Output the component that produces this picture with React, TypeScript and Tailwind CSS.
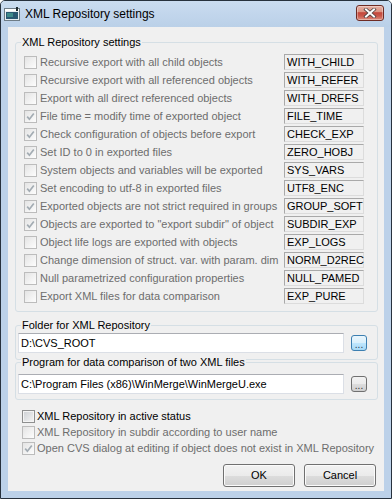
import React from 'react'

type Row = { label: string; code: string; checked: boolean }

const rows: Row[] = [
  { label: 'Recursive export with all child objects', code: 'WITH_CHILD', checked: false },
  { label: 'Recursive export with all referenced objects', code: 'WITH_REFER', checked: false },
  { label: 'Export with all direct referenced objects', code: 'WITH_DREFS', checked: false },
  { label: 'File time = modify time of exported object', code: 'FILE_TIME', checked: true },
  { label: 'Check configuration of objects before export', code: 'CHECK_EXP', checked: true },
  { label: 'Set ID to 0 in exported files', code: 'ZERO_HOBJ', checked: true },
  { label: 'System objects and variables will be exported', code: 'SYS_VARS', checked: false },
  { label: 'Set encoding to utf-8 in exported files', code: 'UTF8_ENC', checked: true },
  { label: 'Exported objects are not strict required in groups', code: 'GROUP_SOFT', checked: true },
  { label: 'Objects are exported to "export subdir" of object', code: 'SUBDIR_EXP', checked: true },
  { label: 'Object life logs are exported with objects', code: 'EXP_LOGS', checked: false },
  { label: 'Change dimension of struct. var. with param. dim', code: 'NORM_D2REC', checked: false },
  { label: 'Null parametrized configuration properties', code: 'NULL_PAMED', checked: false },
  { label: 'Export XML files for data comparison', code: 'EXP_PURE', checked: false },
]

function CheckBox({ checked, disabled }: { checked?: boolean; disabled?: boolean }) {
  return (
    <span
      className={
        disabled
          ? 'flex h-[13px] w-[13px] shrink-0 items-center justify-center border border-[#bcbcbc] bg-linear-to-br from-[#e4e4e4] to-[#fdfdfd]'
          : 'flex h-[13px] w-[13px] shrink-0 items-center justify-center border border-[#8e8f8f] bg-linear-to-br from-[#cdd0d4] to-[#f5f5f5] shadow-[inset_0_0_0_1px_#f4f4f4]'
      }
    >
      {checked && (
        <svg width="11" height="11" viewBox="0 0 11 11">
          <path d="M2.2 5.6 L4.4 8.2 L8.8 2.4" fill="none" stroke="#a3acb3" strokeWidth="1.7" />
        </svg>
      )}
    </span>
  )
}

// legend sits on the group border; offset depends on the fieldset's left padding
function Legend({ children, inset }: { children: React.ReactNode; inset?: boolean }) {
  return (
    <legend
      className={
        inset
          ? 'ml-[3px] bg-[#f0f0f0] px-[1px] leading-[13px] text-black'
          : '-ml-[3px] bg-[#f0f0f0] px-[1px] leading-[13px] text-black'
      }
    >
      {children}
    </legend>
  )
}

function BrowseButton({ hot }: { hot?: boolean }) {
  return (
    <button
      className={
        hot
          ? 'flex h-[16px] w-[16px] shrink-0 items-end justify-center rounded-[3px] border border-[#3c7fb1] bg-[linear-gradient(#eaf6fd,#d9f0fc_50%,#bee6fd_50%,#a7d9f5)] pb-[1px] text-[10px] leading-[8px] text-[#1e3950]'
          : 'flex h-[16px] w-[16px] shrink-0 items-end justify-center rounded-[3px] border border-[#707070] bg-[linear-gradient(#f2f2f2,#ebebeb_50%,#dddddd_50%,#cfcfcf)] pb-[1px] text-[10px] leading-[8px] text-[#333]'
      }
    >
      ...
    </button>
  )
}

function AppIcon() {
  return (
    <svg width="16" height="16" viewBox="0 0 16 16">
      <rect x="0.5" y="2.5" width="15" height="12" fill="#e9eef2" stroke="#6e7c86" />
      <rect x="1" y="3" width="14" height="2" fill="#ffffff" />
      <rect x="2" y="6" width="12" height="7" fill="#2a5872" />
      <rect x="3" y="7" width="6" height="4" fill="#3f8a8a" />
      <rect x="12" y="1" width="2" height="4" fill="#1e2a30" />
    </svg>
  )
}

function CloseButton() {
  return (
    <div className="flex h-[16px] w-[28px] items-center justify-center rounded-[3px] border border-[#6e2b24] bg-[linear-gradient(#e6b0a5,#dc9584_40%,#c4473b_48%,#c9574a_70%,#dd8d7c)] shadow-[inset_0_0_0_1px_rgba(255,255,255,0.35)]">
      <svg width="14" height="10" viewBox="0 0 14 10">
        <path d="M3 1.5 L11 8.5 M11 1.5 L3 8.5" stroke="#4d4040" strokeWidth="3.6" strokeLinecap="square" />
        <path d="M3 1.5 L11 8.5 M11 1.5 L3 8.5" stroke="#ffffff" strokeWidth="2" strokeLinecap="square" />
      </svg>
    </div>
  )
}

export default function App() {
  return (
    <div className="h-[499px] w-[392px] font-['Liberation_Sans',Arial,sans-serif] text-[11px]">
      <div className="flex h-full flex-col rounded-t-[5px] border border-[#27313d] bg-[#bcd1e9]">
        {/* Title bar */}
        <div className="flex h-[26px] shrink-0 items-start rounded-t-[4px] bg-linear-to-b from-[#cadcf0] to-[#bad0e8]">
          <div className="ml-[3px] mt-[5px]">
            <AppIcon />
          </div>
          <span className="ml-[5px] mt-[6px] text-[12px] leading-[14px] text-black">XML Repository settings</span>
          <div className="ml-auto mr-[7px] mt-[4px]">
            <CloseButton />
          </div>
        </div>

        {/* Client area */}
        <div className="mx-[7px] mb-[7px] flex flex-1 flex-col bg-[#f0f0f0] pt-[9px]">
          <fieldset className="ml-[7px] mr-[6px] rounded-[3px] border border-[#d5dfe5] pb-[6px] pl-[8px] pr-[13px] pt-[4px]">
            <Legend>XML Repository settings</Legend>
            {rows.map((row) => (
              <div key={row.code} className="flex h-[18px] items-center">
                <CheckBox checked={row.checked} disabled />
                <span className="ml-[3px] flex-1 overflow-hidden whitespace-nowrap text-[#6d6d6d]">{row.label}</span>
                <div className="ml-[2px] flex h-[16px] w-[80px] shrink-0 items-center border border-[#a9a9a9] border-b-[#dcdcdc] border-r-[#dcdcdc] pl-[2px] text-black">
                  {row.code}
                </div>
              </div>
            ))}
          </fieldset>

          <fieldset className="ml-[7px] mr-[6px] mt-[7px] rounded-[3px] border border-[#d5dfe5] pb-[6px] pl-[2px] pr-[10px] pt-[1px]">
            <Legend inset>Folder for XML Repository</Legend>
            <div className="flex items-center gap-[7px]">
              <div className="flex h-[20px] flex-1 items-center border border-[#dbdfe6] border-t-[#abadb3] bg-white pl-[2px] text-black">
                D:\CVS_ROOT
              </div>
              <BrowseButton hot />
            </div>
          </fieldset>

          <fieldset className="relative ml-[7px] mr-[6px] -mt-[4px] rounded-[3px] border border-[#d5dfe5] pb-[5px] pl-[2px] pr-[10px] pt-[5px]">
            <Legend inset>Program for data comparison of two XML files</Legend>
            <div className="flex items-center gap-[7px]">
              <div className="flex h-[20px] flex-1 items-center border border-[#dbdfe6] border-t-[#abadb3] bg-white pl-[2px] text-black">
                C:\Program Files (x86)\WinMerge\WinMergeU.exe
              </div>
              <BrowseButton />
            </div>
          </fieldset>

          <div className="mt-[8px] flex flex-col pl-[14px]">
            <div className="flex h-[16px] items-center">
              <CheckBox />
              <span className="ml-[2px] text-black">XML Repository in active status</span>
            </div>
            <div className="flex h-[16px] items-center">
              <CheckBox disabled />
              <span className="ml-[2px] text-[#6d6d6d]">XML Repository in subdir according to user name</span>
            </div>
            <div className="flex h-[16px] items-center">
              <CheckBox checked disabled />
              <span className="ml-[2px] whitespace-nowrap text-[#6d6d6d]">
                Open CVS dialog at editing if object does not exist in XML Repository
              </span>
            </div>
          </div>

          <div className="mt-[8px] flex justify-end gap-[9px] pr-[8px]">
            <button className="h-[23px] w-[72px] rounded-[3px] border border-[#707070] bg-[linear-gradient(#f2f2f2,#ebebeb_50%,#dddddd_50%,#cfcfcf)] text-black shadow-[inset_0_0_0_1px_#fbfbfb]">
              OK
            </button>
            <button className="h-[23px] w-[72px] rounded-[3px] border border-[#707070] bg-[linear-gradient(#f2f2f2,#ebebeb_50%,#dddddd_50%,#cfcfcf)] text-black shadow-[inset_0_0_0_1px_#fbfbfb]">
              Cancel
            </button>
          </div>
        </div>
      </div>
    </div>
  )
}
